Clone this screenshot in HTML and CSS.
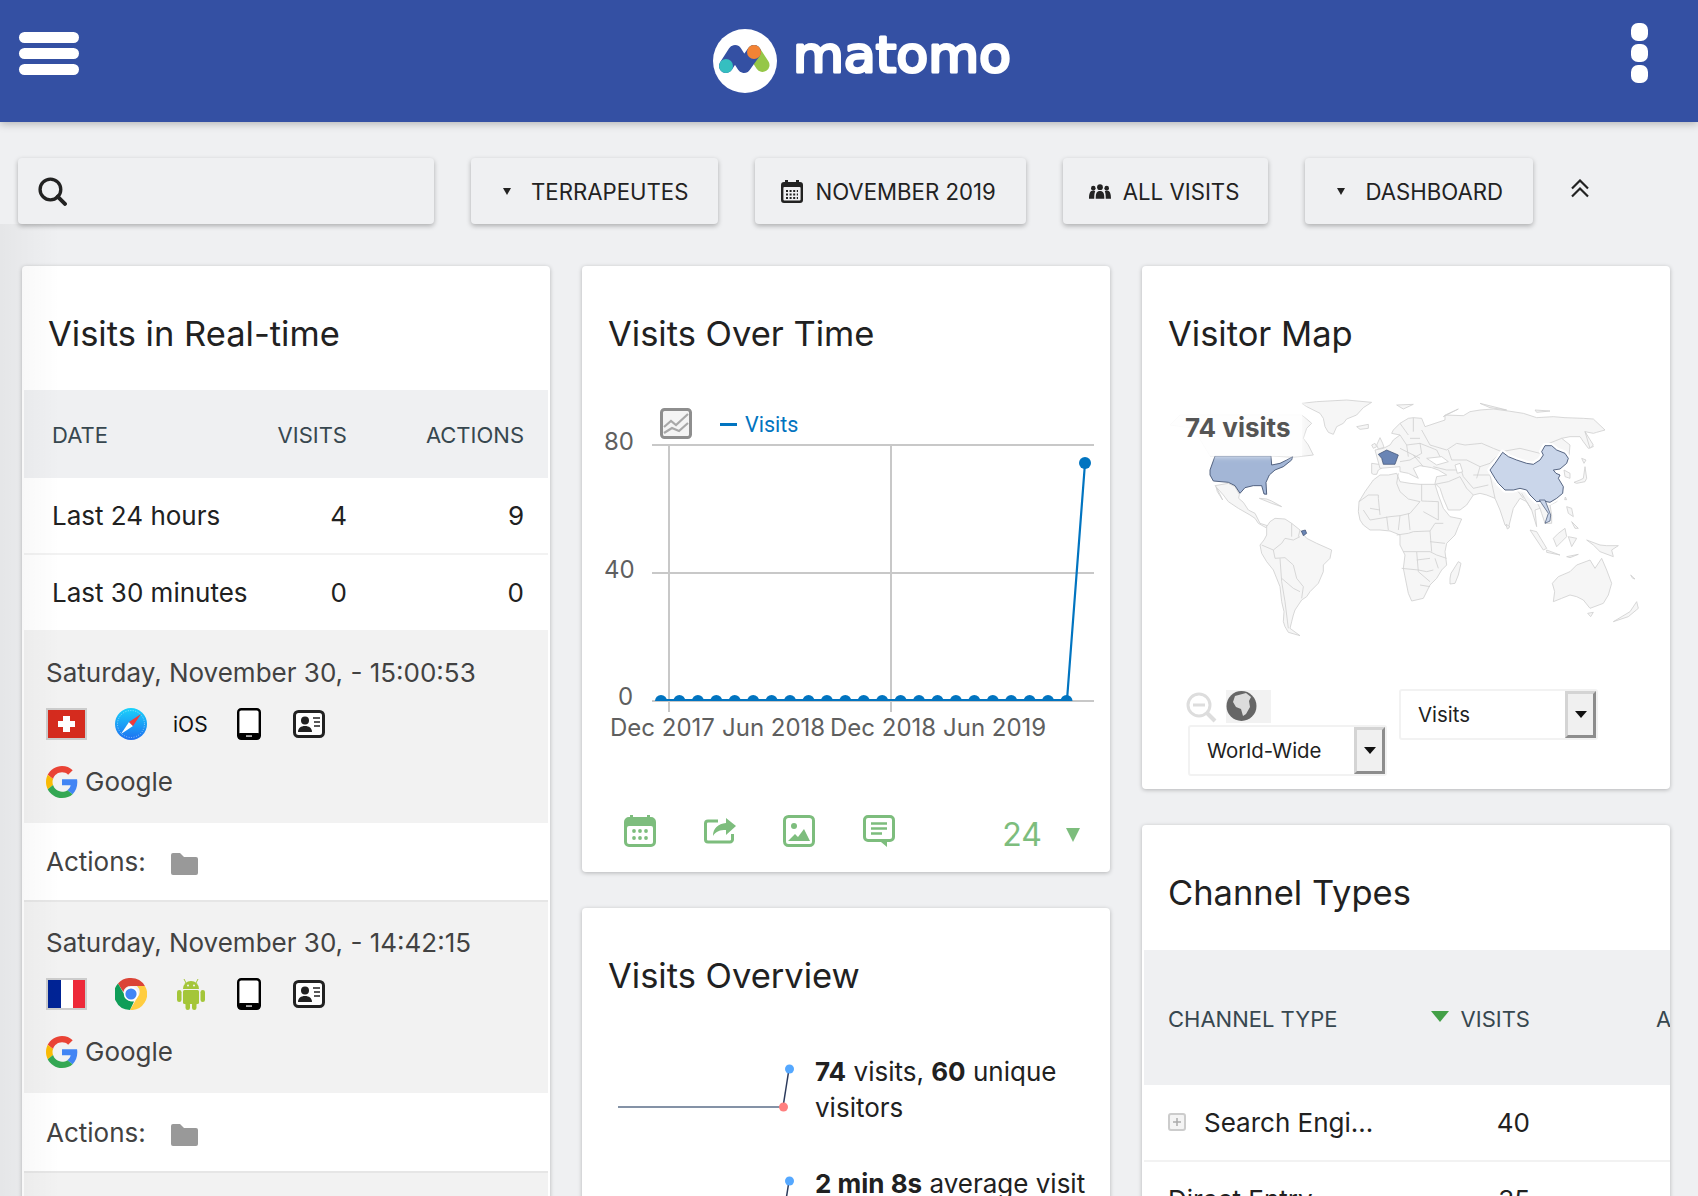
FILE: index.html
```html
<!DOCTYPE html>
<html lang="en">
<head>
<meta charset="utf-8">
<title>Matomo</title>
<link rel="stylesheet" href="styles.css">
</head>
<body>
<svg class="sprites" aria-hidden="true">
  <defs>
    <symbol id="g-logo" viewBox="0 0 48 48">
      <path fill="#EA4335" d="M24 9.5c3.54 0 6.71 1.22 9.21 3.6l6.85-6.85C35.9 2.38 30.47 0 24 0 14.62 0 6.51 5.38 2.56 13.22l7.98 6.19C12.43 13.72 17.74 9.5 24 9.5z"/>
      <path fill="#4285F4" d="M46.98 24.55c0-1.57-.15-3.09-.38-4.55H24v9.02h12.94c-.58 2.96-2.26 5.48-4.78 7.18l7.73 6c4.51-4.18 7.09-10.36 7.09-17.65z"/>
      <path fill="#FBBC05" d="M10.53 28.59c-.48-1.45-.76-2.99-.76-4.59s.27-3.14.76-4.59l-7.98-6.19C.92 16.46 0 20.12 0 24c0 3.88.92 7.54 2.56 10.78l7.97-6.19z"/>
      <path fill="#34A853" d="M24 48c6.48 0 11.93-2.13 15.89-5.81l-7.73-6c-2.15 1.45-4.92 2.3-8.16 2.3-6.26 0-11.57-4.22-13.47-9.91l-7.98 6.19C6.51 42.62 14.62 48 24 48z"/>
    </symbol>
    <symbol id="tablet" viewBox="0 0 24 32">
      <rect x="1.2" y="1.2" width="21.6" height="29.6" rx="3" fill="#fff" stroke="#000" stroke-width="2.4"/>
      <rect x="1" y="25" width="22" height="6" rx="2" fill="#000"/>
      <rect x="9" y="27.4" width="6" height="1.3" fill="#f2f2f2"/>
    </symbol>
    <symbol id="contact" viewBox="0 0 32 28">
      <rect x="1.5" y="1.5" width="29" height="25" rx="4" fill="#fff" stroke="#222" stroke-width="3"/>
      <circle cx="12" cy="10.5" r="4" fill="#222"/>
      <path fill="#222" d="M5 22c0-4 3-6 7-6s7 2 7 6z"/>
      <path stroke="#222" stroke-width="1.7" d="M20 8h7M21 12h6M21 16h6"/>
    </symbol>
    <symbol id="folder" viewBox="0 0 27 22">
      <path fill="#999" d="M0 2a2 2 0 0 1 2-2h7l4 4h12a2 2 0 0 1 2 2v14a2 2 0 0 1-2 2H2a2 2 0 0 1-2-2z"/>
    </symbol>
  </defs>
</svg>

<header class="topbar">
  <div class="burger"><span class="burger-bar"></span><span class="burger-bar"></span><span class="burger-bar"></span></div>
  <svg class="logo" viewBox="0 0 330 80" width="330" height="80" role="img" aria-label="matomo">
    <circle cx="45" cy="41" r="32" fill="#fff"/>
    <path d="M54 32L62.500 45" fill="none" stroke="#95c748" stroke-width="14" stroke-linecap="round"/>
    <path d="M26 46L35 32L44 46L54 32" fill="none" stroke="#3450a3" stroke-width="14" stroke-linecap="round" stroke-linejoin="round"/>
    <circle cx="54" cy="32" r="7" fill="#f38334"/>
    <circle cx="26" cy="46" r="7" fill="#35bfc0"/>
    <text class="logo-word" x="93" y="52" textLength="218" lengthAdjust="spacingAndGlyphs">matomo</text>
  </svg>
  <div class="kebab"><span class="kebab-dot"></span><span class="kebab-dot"></span><span class="kebab-dot"></span></div>
</header>

<nav class="toolbar">
  <div class="tool tool-search">
    <svg width="29" height="29" viewBox="0 0 28 28"><circle cx="12" cy="12" r="10" fill="none" stroke="#222" stroke-width="3.200"/><path d="M19 19l7 7" stroke="#222" stroke-width="3.800" stroke-linecap="round"/></svg>
  </div>
  <div class="tool tool-drop"><span class="caret"></span>TERRAPEUTES</div>
  <div class="tool">
    <svg width="22" height="23" viewBox="0 0 22 23"><path fill="#222" d="M4 0h3v2h8V0h3v2h1a3 3 0 0 1 3 3v15a3 3 0 0 1-3 3H3a3 3 0 0 1-3-3V5a3 3 0 0 1 3-3h1z"/><rect x="2.4" y="7" width="17.2" height="13.4" rx="1" fill="#f0f0f2"/><path stroke="#222" stroke-width="2" stroke-dasharray="2 1.6" d="M5 11h12M5 14.5h12M5 18h12" /></svg>
    NOVEMBER 2019
  </div>
  <div class="tool tool-visits">
    <svg width="22" height="15" viewBox="0 0 23 15"><g fill="#222"><circle cx="11.500" cy="3" r="3"/><circle cx="4.500" cy="4" r="2.400"/><circle cx="18.500" cy="4" r="2.400"/><path d="M7 15c0-6 1-8 4.500-8S16 9 16 15z"/><path d="M0 15c0-5 1-8.500 4.500-8.500 1 0 1.500.3 2 .8C5.600 9 5.500 12 5.500 15zM23 15c0-5-1-8.500-4.500-8.500-1 0-1.500.3-2 .8C17.400 9 17.500 12 17.500 15z"/></g></svg>
    ALL VISITS
  </div>
  <div class="tool tool-drop"><span class="caret"></span>DASHBOARD</div>
  <svg class="collapse" width="20" height="19" viewBox="0 0 20 19"><path d="M2 9.500l8-8 8 8M2 17.500l8-8 8 8" fill="none" stroke="#222" stroke-width="2.200"/></svg>
</nav>

<main class="dashboard">
  <section class="col">
    <article class="card">
      <h2 class="card-title">Visits in Real-time</h2>
      <table class="grid-table realtime">
        <colgroup><col class="rt-a"><col class="rt-b"><col class="rt-c"></colgroup>
        <thead><tr><th class="left">DATE</th><th>VISITS</th><th>ACTIONS</th></tr></thead>
        <tbody>
          <tr><td class="left">Last 24 hours</td><td>4</td><td>9</td></tr>
          <tr><td class="left">Last 30 minutes</td><td>0</td><td>0</td></tr>
        </tbody>
      </table>
      <div class="log log-first">
        <div class="log-date">Saturday, November 30, - 15:00:53</div>
        <div class="log-icons">
          <svg width="41" height="32" viewBox="0 0 41 32"><rect width="41" height="32" fill="#ccc"/><rect x="2" y="2" width="37" height="28" fill="#d52b1e"/><path fill="#fff" d="M17 8h7v5h5v6h-5v5h-7v-5h-5v-6h5z"/></svg>
          <svg width="32" height="32" viewBox="0 0 32 32"><defs><linearGradient id="saf" x1="0" y1="0" x2="0" y2="1"><stop offset="0" stop-color="#19d3fb"/><stop offset="1" stop-color="#1e6ff1"/></linearGradient></defs><circle cx="16" cy="16" r="16" fill="url(#saf)"/><circle cx="16" cy="16" r="13.500" fill="none" stroke="#fff" stroke-opacity=".5" stroke-dasharray="1 1.500"/><path fill="#fff" d="M6 26l8-12 4 4z"/><path fill="#f03a3a" d="M26 6l-12 8 4 4z"/></svg>
          <span class="os-text">iOS</span>
          <svg width="24" height="32"><use href="#tablet"/></svg>
          <svg width="32" height="28"><use href="#contact"/></svg>
        </div>
        <div class="log-ref"><svg width="32" height="32"><use href="#g-logo"/></svg>Google</div>
      </div>
      <div class="log-actions">Actions:<svg width="27" height="22"><use href="#folder"/></svg></div>
      <div class="log">
        <div class="log-date">Saturday, November 30, - 14:42:15</div>
        <div class="log-icons">
          <svg width="41" height="32" viewBox="0 0 41 32"><rect width="41" height="32" fill="#ccc"/><rect x="2" y="2" width="13" height="28" fill="#002395"/><rect x="15" y="2" width="12" height="28" fill="#fff"/><rect x="27" y="2" width="12" height="28" fill="#ed2939"/></svg>
          <svg width="32" height="32" viewBox="0 0 32 32"><path fill="#db4437" d="M16 0a16 16 0 0 1 13.900 8H16a8 8 0 0 0-7.700 5.900L3 5.500A16 16 0 0 1 16 0z"/><path fill="#0f9d58" d="M3 5.500l6.900 12A8 8 0 0 0 19 23.400l-4 8.600A16 16 0 0 1 3 5.500z"/><path fill="#ffcd40" d="M29.900 8A16 16 0 0 1 15 32l7-12a8 8 0 0 0 0-12z"/><circle cx="16" cy="16" r="7.200" fill="#fff"/><circle cx="16" cy="16" r="5.600" fill="#4285f4"/></svg>
          <svg class="droid" width="28" height="32" viewBox="0 0 28 32"><g fill="#a4c639"><path d="M6 11a8 8 0 0 1 16 0z"/><rect x="6" y="12" width="16" height="14" rx="1.500"/><rect x="0" y="12" width="4.500" height="12" rx="2.200"/><rect x="23.500" y="12" width="4.500" height="12" rx="2.200"/><rect x="8.500" y="24" width="4.500" height="8" rx="2.200"/><rect x="15" y="24" width="4.500" height="8" rx="2.200"/><path stroke="#a4c639" stroke-width="1" d="M9 5L7 1M19 5l2-4"/></g><circle cx="11" cy="7.500" r="1" fill="#f2f2f2"/><circle cx="17" cy="7.500" r="1" fill="#f2f2f2"/></svg>
          <svg width="24" height="32"><use href="#tablet"/></svg>
          <svg width="32" height="28"><use href="#contact"/></svg>
        </div>
        <div class="log-ref"><svg width="32" height="32"><use href="#g-logo"/></svg>Google</div>
      </div>
      <div class="log-actions">Actions:<svg width="27" height="22"><use href="#folder"/></svg></div>
      <div class="log log-tail"></div>
    </article>
  </section>

  <section class="col">
    <article class="card">
      <h2 class="card-title">Visits Over Time</h2>
      <svg class="chart" width="528" height="410" viewBox="582 390 528 410">
        <defs><clipPath id="base"><rect x="582" y="390" width="528" height="311"/></clipPath></defs>
        <g stroke="#c8c8c8" stroke-width="2" fill="none">
          <path d="M652 445H1094M652 573H1094M652 701H1094M669 445V712M891 445V712"/>
        </g>
        <g clip-path="url(#base)" fill="#0174c0">
          <circle cx="661" cy="701" r="6"/><circle cx="679.400" cy="701" r="6"/><circle cx="697.900" cy="701" r="6"/><circle cx="716.300" cy="701" r="6"/><circle cx="734.700" cy="701" r="6"/><circle cx="753.200" cy="701" r="6"/><circle cx="771.600" cy="701" r="6"/><circle cx="790" cy="701" r="6"/><circle cx="808.500" cy="701" r="6"/><circle cx="826.900" cy="701" r="6"/><circle cx="845.300" cy="701" r="6"/><circle cx="863.700" cy="701" r="6"/><circle cx="882.200" cy="701" r="6"/><circle cx="900.600" cy="701" r="6"/><circle cx="919" cy="701" r="6"/><circle cx="937.500" cy="701" r="6"/><circle cx="955.900" cy="701" r="6"/><circle cx="974.300" cy="701" r="6"/><circle cx="992.800" cy="701" r="6"/><circle cx="1011.200" cy="701" r="6"/><circle cx="1029.600" cy="701" r="6"/><circle cx="1048" cy="701" r="6"/><circle cx="1066.500" cy="701" r="6"/>
        </g>
        <path d="M661 700H1067L1085 463" fill="none" stroke="#0174c0" stroke-width="2.200"/>
        <circle cx="1085" cy="463" r="6" fill="#0174c0"/>
        <g class="axis-label">
          <text x="604" y="450">80</text><text x="604" y="578">40</text><text x="618" y="705">0</text>
          <text x="610" y="736">Dec 2017</text><text x="722" y="736">Jun 2018</text><text x="830" y="736">Dec 2018</text><text x="943" y="736">Jun 2019</text>
        </g>
        <g>
          <rect x="661.500" y="409.500" width="29" height="28" rx="3" fill="#f4f4f4" stroke="#8e8e8e" stroke-width="3"/>
          <path d="M664 427l7-6 5 4 12-11M664 433l8-5 7 3 9-8" fill="none" stroke="#a8a8a8" stroke-width="2.200"/>
        </g>
        <rect x="720" y="423" width="17" height="3" fill="#0174c0"/>
        <text class="legend-label" x="745" y="432">Visits</text>
      </svg>
      <div class="chart-foot">
        <svg width="32" height="32" viewBox="0 0 32 32"><path fill="#7dbd7d" d="M6 0h3v2h14V0h3v2h1a5 5 0 0 1 5 5v20a5 5 0 0 1-5 5H5a5 5 0 0 1-5-5V7a5 5 0 0 1 5-5h1z"/><rect x="3" y="11" width="26" height="18" rx="2" fill="#fff"/><g fill="#7dbd7d"><circle cx="10" cy="16" r="1.900"/><circle cx="16" cy="16" r="1.900"/><circle cx="22" cy="16" r="1.900"/><circle cx="10" cy="23" r="1.900"/><circle cx="16" cy="23" r="1.900"/><circle cx="22" cy="23" r="1.900"/></g></svg>
        <svg width="32" height="32" viewBox="0 0 32 32"><path d="M14 6H4a2.500 2.500 0 0 0-2.500 2.500v16A2.500 2.500 0 0 0 4 27h22a2.500 2.500 0 0 0 2.500-2.500V19" fill="none" stroke="#7dbd7d" stroke-width="3"/><path fill="#7dbd7d" d="M22 3l10 8-10 9v-5c-6 0-10 1-13 6 0-8 5-12 13-13z"/></svg>
        <svg width="32" height="32" viewBox="0 0 32 32"><rect x="1.500" y="1.500" width="29" height="29" rx="4" fill="#fff" stroke="#7dbd7d" stroke-width="3"/><circle cx="11" cy="11" r="3" fill="#7dbd7d"/><path fill="#7dbd7d" d="M5 26l7-7 3 3 6-8 6 12z"/></svg>
        <svg width="32" height="32" viewBox="0 0 32 32"><path fill="#7dbd7d" d="M5 0h22a5 5 0 0 1 5 5v17a5 5 0 0 1-5 5h-3v5l-6-5H5a5 5 0 0 1-5-5V5a5 5 0 0 1 5-5z"/><rect x="3" y="3" width="26" height="21" rx="2" fill="#fff"/><path stroke="#7dbd7d" stroke-width="2.400" d="M8 8.500h16M8 13.500h16M8 18.500h11"/></svg>
        <div class="period">24<span class="period-tri"></span></div>
      </div>
    </article>

    <article class="card">
      <h2 class="card-title">Visits Overview</h2>
      <div class="spark-list">
        <div class="spark-row">
          <svg width="197" height="72" viewBox="0 0 197 72"><path d="M0 53H165" stroke="#8492a6" stroke-width="2"/><path d="M165 53L171 15" stroke="#2b3a5c" stroke-width="1.500"/><circle cx="165.500" cy="53" r="4.500" fill="#ff7f7f"/><circle cx="171.500" cy="15" r="4.500" fill="#55a8ff"/></svg>
          <p class="spark-text"><b>74</b> visits, <b>60</b> unique visitors</p>
        </div>
        <div class="spark-row">
          <svg width="197" height="72" viewBox="0 0 197 72"><path d="M165 53L171 15" stroke="#2b3a5c" stroke-width="1.500"/><circle cx="171.500" cy="15" r="4.500" fill="#55a8ff"/></svg>
          <p class="spark-text"><b>2 min 8s</b> average visit duration</p>
        </div>
      </div>
    </article>
  </section>

  <section class="col">
    <article class="card">
      <h2 class="card-title">Visitor Map</h2>
      <div class="map-wrap">
        <svg class="map" width="490" height="250" viewBox="0 0 1470 750">
          <g fill="#f6f6f6" stroke="#d0d0d0" stroke-width="2.500" stroke-linejoin="round">
            <path d="M30 90L60 60L425 60L440 72L455 85L440 100L430 130L445 150L460 180L400 187L333 183L150 183L100 100Z"/>
            <path d="M425 25L470 20L560 15L635 22L610 38L590 60L560 72L550 85L530 95L520 118L505 112L495 95L490 70L480 55L440 35Z"/>
            <path d="M590 95L625 88L625 100L600 103Z"/>
            <path d="M635 150L645 145L650 155L640 160Z"/>
            <path d="M650 150L660 128L668 145L672 157L655 162Z"/>
            <path d="M635 205L670 210L672 215L655 225L650 238L640 238L635 235Z"/>
            <path d="M165 272L205 265L225 275L238 298L236 310L250 322L265 345L285 355L300 385L322 392L318 398L295 385L285 370L270 360L235 340L205 320L190 300Z"/>
            <path d="M168 275L172 290L188 315L180 298Z"/>
            <path d="M298 310L320 312L335 318L365 335L335 325Z"/>
            <path d="M320 395L330 380L345 370L375 372L395 385L420 405L440 430L470 445L515 465L510 490L490 510L490 530L475 565L450 590L440 605L425 615L415 630L405 645L400 660L395 680L390 700L420 722L385 712L375 695L370 680L372 650L365 620L360 575L340 525L320 500L305 475L300 450L312 435L320 420Z"/>
            <path fill="none" d="M305 450L340 465L345 490M340 465L365 445L375 430L400 435L420 425M345 490L375 488L400 510L410 550L430 575L425 610M360 490L365 560L375 620L385 700M365 550L400 580L420 590M395 385L395 425M420 405L415 425"/>
          </g>
          <g transform="translate(660 0)" fill="#f6f6f6" stroke="#d0d0d0" stroke-width="2.500" stroke-linejoin="round">
            <path d="M-63 320L-45 290L-20 255L0 240L25 240L50 235L60 260L90 265L120 268L165 268L175 300L190 340L210 365L245 372L235 395L225 420L200 445L195 470L200 510L185 525L170 550L150 570L130 610L95 618L85 595L80 570L70 520L75 480L60 450L60 420L30 408L0 405L-30 405L-50 390L-60 375L-65 350Z"/>
            <path fill="none" d="M-63 320L-35 300L-5 300L-5 310L0 360M55 235L50 265L60 290L85 312L120 320M125 268L125 318L175 320L175 345L175 375M-30 375L30 365L60 362L90 355L120 320M50 420L85 415L100 410L150 408L165 385L190 385M70 470L110 470L150 470L170 480L200 490M110 470L115 530L150 560M65 520L115 525L140 530L160 525M150 408L155 470M20 365L25 405M60 362L55 405M-30 340L0 345M-50 345L-30 375M85 355L90 405M130 350L175 375M150 440L195 445M110 495L150 490M165 490L175 520M120 570L150 575"/>
            <path d="M235 500L243 505L235 540L225 565L210 567L210 550L213 535Z"/>
            <path d="M-15 165L10 160L30 150L40 135L60 120L35 115L40 105L60 85L85 70L100 68L125 70L135 95L165 85L195 75L195 60L250 62L270 50L300 45L340 42L385 48L430 55L470 68L520 65L555 68L610 70L640 72L675 105L650 112L640 115L615 110L625 130L640 155L625 160L610 140L600 125L570 125L545 130L570 150L565 205L540 225L530 240L550 290L530 320L510 330L515 360L515 385L495 385L485 355L480 340L465 345L470 395L455 345L440 320L420 310L400 340L385 400L375 390L360 345L345 310L320 300L300 295L280 300L260 330L240 345L205 345L190 310L180 280L165 265L170 245L200 240L175 225L155 218L120 212L100 220L115 250L85 235L60 230L60 215L0 220Z"/>
            <path fill="none" d="M125 105L150 150L200 165L230 145L255 150L305 145L340 160L365 170L420 160L480 175L495 150L545 130M205 165L215 195L260 195L300 215L330 205L365 170M60 120L80 150L120 145L170 165L180 185M60 200L90 195L125 175M100 180L130 215M60 160L120 190M80 150L85 185M120 145L125 175M240 215L250 245L280 280L325 270M165 268L205 260L240 245L260 280L280 300M330 240L345 310M345 265L380 275L415 290L430 310M425 295L440 320L455 345M90 130L120 130M160 215L200 225L240 225M280 240L330 240M300 215L290 250M470 320L480 340M60 85L85 120M100 68L100 110"/>
            <path fill="#fff" d="M140 190L185 185L205 200L170 210Z"/>
            <path fill="#fff" d="M225 210L240 205L248 230L232 235Z"/>
            <path d="M552 225L570 235L570 250L555 245Z"/>
            <path d="M582 262L600 255L610 250L615 215L620 250L615 260L590 265Z"/>
            <path d="M605 190L618 195L612 205Z"/>
            <path d="M615 110L640 150L630 160Z"/>
            <path d="M556 306L560 314L554 314Z"/>
            <path d="M560 335L575 340L580 365L565 355Z"/>
            <path d="M575 380L595 400L585 400Z"/>
            <path d="M520 430L535 415L555 400L560 425L545 440L530 455Z"/>
            <path d="M450 405L470 410L500 460L490 465Z"/>
            <path d="M500 465L540 480L500 472Z"/>
            <path d="M565 425L590 430L575 455Z"/>
            <path d="M560 485L595 478L570 488Z"/>
            <path d="M620 435L660 450L680 452L715 452L695 465L700 485L660 470L640 450Z"/>
            <path d="M517 565L535 545L570 530L590 510L630 495L645 520L665 490L680 525L695 565L685 600L670 625L630 640L610 615L590 605L570 600L545 610L520 620L524 590Z"/>
            <path d="M623 655L640 652L632 665Z"/>
            <path d="M700 680L750 650L770 620L775 640L745 665Z"/>
            <path d="M752 540L765 552L758 550Z"/>
            <path d="M50 30L100 28L70 42Z"/>
            <path d="M190 65L235 42L200 58Z"/>
            <path d="M300 25L380 45L330 38Z"/>
            <path d="M465 45L510 48L470 52Z"/>
            <path d="M378 388L390 395L382 402Z"/>
          </g>
          <path fill="#a3b6d6" stroke="#3a4a6b" stroke-width="2.500" stroke-linejoin="round" d="M150 225L165 183L333 183L335 210L360 205L380 195L398 185L395 195L370 215L345 225L328 240L318 262L320 298L312 297L305 272L280 272L255 278L240 295L225 272L205 262L160 258L150 240Z"/>
          <path fill="#6a85b5" stroke="#3a4a6b" stroke-width="2" stroke-linejoin="round" d="M655 178L680 165L715 180L705 208L670 208L665 190Z"/>
          <path fill="#6a85b5" stroke="#3a4a6b" stroke-width="2" stroke-linejoin="round" d="M424 408L436 405L440 415L430 422Z"/>
          <g transform="translate(660 0)" stroke-linejoin="round">
            <path fill="none" stroke="#fff" stroke-width="16" d="M330 225L345 205L368 172L385 185L410 195L440 205L460 208L480 195L490 180L485 170L495 152L515 152L530 165L555 175L565 190L560 205L540 222L520 225L528 235L540 240L535 250L550 275L548 295L530 310L510 322L490 318L470 320L450 300L440 285L420 280L400 285L375 285L355 265L345 250Z"/>
            <path fill="#cad6ea" stroke="#3a4a6b" stroke-width="2.500" d="M330 225L345 205L368 172L385 185L410 195L440 205L460 208L480 195L490 180L485 170L495 152L515 152L530 165L555 175L565 190L560 205L540 222L520 225L528 235L540 240L535 250L550 275L548 295L530 310L510 322L490 318L470 320L450 300L440 285L420 280L400 285L375 285L355 265L345 250Z"/>
            <path fill="#cad6ea" stroke="#3a4a6b" stroke-width="2" d="M478 315L495 315L512 360L510 378L495 385L505 355Z"/>
          </g>
        </svg>
        <div class="map-tip">74 visits</div>
      </div>
      <div class="map-controls">
        <div class="map-left">
          <div class="map-tools">
            <svg class="zoom-out" width="31" height="31" viewBox="0 0 31 31"><circle cx="13" cy="13" r="11" fill="none" stroke="#ddd" stroke-width="3"/><path d="M7 13h12" stroke="#ddd" stroke-width="3"/><path d="M21 21l8 8" stroke="#ddd" stroke-width="4"/></svg>
            <div class="globe-tile"><svg width="31" height="32" viewBox="0 0 31 32"><circle cx="15.500" cy="16" r="15" fill="#666"/><path fill="#dcdcdc" d="M9 6l11-3 5 4-2 4 1 6-4 7-3 2-2-7-5-2-3-5z"/></svg></div>
          </div>
          <div class="select"><span class="select-text">World-Wide</span><span class="select-btn"><span class="select-tri"></span></span></div>
        </div>
        <div class="select"><span class="select-text">Visits</span><span class="select-btn"><span class="select-tri"></span></span></div>
      </div>
    </article>

    <article class="card">
      <h2 class="card-title channel-title">Channel Types</h2>
      <div class="clip">
        <table class="grid-table channel">
          <colgroup><col class="ch-a"><col class="ch-b"><col class="ch-c"></colgroup>
          <thead><tr><th class="left">CHANNEL TYPE</th><th><span class="sort-tri"></span>VISITS</th><th>ACTIONS</th></tr></thead>
          <tbody>
            <tr><td class="left"><svg class="plus" width="18" height="18" viewBox="0 0 18 18"><rect x="1" y="1" width="16" height="16" rx="2" fill="#f4f4f4" stroke="#ccc" stroke-width="2"/><path d="M9 5v8M5 9h8" stroke="#aaa" stroke-width="1.500"/></svg>Search Engi...</td><td>40</td><td></td></tr>
            <tr><td class="left">Direct Entry</td><td>35</td><td></td></tr>
          </tbody>
        </table>
      </div>
    </article>
  </section>
</main>
</body>
</html>
```

FILE: styles.css
```css
* { box-sizing: border-box; }
html, body { margin: 0; height: 1196px; overflow: hidden; }
body {
  background: #eff0f2;
  color: #212121;
  font-family: Inter, "Liberation Sans", sans-serif;
  position: relative;
}
.sprites { position: absolute; width: 0; height: 0; }

/* Top bar */
.topbar {
  height: 122px;
  background: #3450a3;
  box-shadow: 0 2px 8px rgba(0, 0, 0, .25);
  display: flex;
  align-items: flex-start;
  justify-content: space-between;
  padding: 0 50px 0 19px;
  position: relative;
}
.burger { display: flex; flex-direction: column; gap: 5px; padding-top: 32px; width: 60px; }
.burger-bar { display: block; height: 11px; background: #fff; border-radius: 6px; }
.logo { margin-top: 20px; margin-left: 19px; }
.logo-word {
  font-family: "DejaVu Sans", sans-serif;
  font-size: 50px;
  font-weight: 400;
  fill: #fff;
  stroke: #fff;
  stroke-width: 3;
  stroke-linejoin: round;
}
.kebab { display: flex; flex-direction: column; gap: 3px; padding-top: 23px; width: 17px; }
.kebab-dot { display: block; height: 18px; background: #fff; border-radius: 7px; }

/* Toolbar */
.toolbar {
  display: flex;
  align-items: flex-start;
  gap: 37px;
  padding: 36px 0 0 18px;
}
.tool {
  height: 66px;
  background: #eff0f2;
  border-radius: 4px;
  box-shadow: 0 2px 5px rgba(0, 0, 0, .28);
  display: flex;
  align-items: center;
  gap: 12px;
  padding: 0 30px 0 26px;
  font-size: 22.200px;
  color: #222;
  white-space: nowrap;
}
.tool-search { width: 416px; padding-left: 20px; }
.tool-drop { gap: 20px; padding-left: 32px; }
.tool-visits { padding-right: 29px; }
.caret {
  width: 0; height: 0;
  border-left: 4.500px solid transparent;
  border-right: 4.500px solid transparent;
  border-top: 7px solid #222;
}
.collapse { margin: 21px 0 0 0; }

/* Dashboard */
.dashboard {
  display: grid;
  grid-template-columns: repeat(3, 528px);
  gap: 32px;
  padding: 42px 0 0 22px;
  position: relative;
}
.dashboard::before {
  content: "";
  position: absolute;
  left: 0;
  top: 0;
  bottom: 0;
  width: 60px;
  background: linear-gradient(90deg, rgba(0, 0, 0, .045), rgba(0, 0, 0, 0));
  pointer-events: none;
  z-index: 2;
}
.col { display: flex; flex-direction: column; gap: 36px; }
.card {
  background: #fff;
  border-radius: 4px;
  box-shadow: 0 1px 4px rgba(0, 0, 0, .25);
  overflow: hidden;
}
.card-title {
  margin: 0;
  height: 124px;
  padding: 46px 0 0 26px;
  font-size: 34.500px;
  line-height: 44px;
  font-weight: 400;
  color: #212121;
}
.channel-title { height: 125px; }

/* Tables */
.grid-table {
  border-collapse: separate;
  border-spacing: 0;
  table-layout: fixed;
  margin: 0 2px;
}
.grid-table th {
  background: #eff0f2;
  color: #37474f;
  font-size: 22px;
  font-weight: 400;
  height: 88px;
  text-align: right;
  padding: 2px 24px 0 0;
  white-space: nowrap;
}
.grid-table td {
  height: 77px;
  font-size: 26px;
  text-align: right;
  padding: 0 24px 0 0;
  border-bottom: 2px solid #f2f2f2;
  white-space: nowrap;
}
.grid-table .left { text-align: left; padding-left: 28px; padding-right: 0; }
.realtime { width: 524px; }
.rt-a { width: 228px; }
.rt-b { width: 119px; }
.rt-c { width: 177px; }

.clip { overflow: hidden; }
.channel { width: 634px; }
.ch-a { width: 238px; }
.ch-b { width: 172px; }
.ch-c { width: 224px; }
.channel th { height: 135px; }
.channel .left { padding-left: 24px; }
.plus { vertical-align: 1px; margin-right: 18px; }
.sort-tri {
  display: inline-block;
  width: 0; height: 0;
  margin: 0 12px 5px 0;
  border-left: 9px solid transparent;
  border-right: 9px solid transparent;
  border-top: 11px solid #43a047;
}

/* Live log */
.log {
  margin: 0 2px;
  background: #f2f2f2;
  padding: 26px 0 25px 22px;
  color: #424242;
}
.log-date { font-size: 26px; line-height: 30px; }
.log-icons {
  display: grid;
  grid-template-columns: 69px 57px 65px 56px 32px;
  align-items: center;
  justify-items: start;
  height: 32px;
  margin-top: 20px;
}
.os-text { font-size: 21px; color: #111; margin-left: 1px; }
.droid { margin-left: 5px; }
.log-ref {
  display: flex;
  align-items: center;
  gap: 7px;
  margin-top: 26px;
  font-size: 26px;
  line-height: 32px;
}
.log-actions {
  margin: 0 2px;
  height: 80px;
  border-bottom: 2px solid #e6e6e6;
  padding: 0 0 0 22px;
  display: flex;
  align-items: center;
  gap: 25px;
  font-size: 26px;
  color: #424242;
}
.log-first + .log-actions { height: 79px; }
.log-actions svg { margin-top: 5px; }
.log-tail { height: 40px; padding: 0; }

/* Chart */
.chart { display: block; }
.axis-label text { font-family: Inter, sans-serif; font-size: 24px; fill: #5f5f5f; }
.legend-label { font-family: Roboto, sans-serif; font-size: 21.500px; fill: #0174c0; }
.chart-foot {
  height: 72px;
  display: flex;
  align-items: flex-start;
  gap: 47.500px;
  padding: 15px 30px 0 42px;
}
.period {
  margin-left: auto;
  display: flex;
  align-items: center;
  gap: 24px;
  font-size: 32px;
  line-height: 40px;
  color: #7dbd7d;
  height: 40px;
}
.period-tri {
  width: 0; height: 0;
  border-left: 7px solid transparent;
  border-right: 7px solid transparent;
  border-top: 14px solid #7dbd7d;
}

/* Overview sparklines */
.spark-list { padding-top: 22px; }
.spark-row {
  display: flex;
  align-items: flex-start;
  padding: 0 20px 40px 36px;
}
.spark-text {
  margin: 0;
  font-size: 26px;
  line-height: 36px;
  color: #212121;
}
.spark-row svg { flex: none; }
.spark-text b { font-weight: 700; }

/* Map */
.map-wrap { position: relative; margin: 5px 0 44px 18px; height: 250px; }
.map { display: block; }
.map-tip {
  position: absolute;
  left: 6px;
  top: 3px;
  width: 136px;
  height: 58px;
  padding-left: 19px;
  font-size: 26px;
  font-weight: 700;
  line-height: 60px;
  color: #555;
  background: rgba(255, 255, 255, .9);
  box-shadow: -2px -3px 6px 3px rgba(255, 255, 255, .85);
  white-space: nowrap;
}
.map-controls {
  display: flex;
  align-items: flex-start;
  gap: 10px;
  padding: 0 0 13px 44px;
}
.map-left { width: 201px; }
.map-tools { display: flex; align-items: flex-start; gap: 9px; height: 36px; padding-top: 3px; }
.zoom-out { flex: none; }
.globe-tile { width: 45px; height: 33px; margin-top: -2px; background: #f2f2f2; }
.globe-tile svg { display: block; }
.select {
  width: 199px;
  height: 51px;
  margin-left: 2px;
  border: 2px solid #f2f2f2;
  border-radius: 3px;
  display: flex;
  align-items: center;
  justify-content: space-between;
  font-size: 20.400px;
  color: #212121;
}
.select-text { padding-left: 17px; }
.select-btn {
  width: 31px;
  height: 47px;
  background: #f0f0f0;
  border-style: solid;
  border-width: 3px;
  border-color: #d4d4d4 #8d8d8d #8d8d8d #d4d4d4;
  display: flex;
  align-items: center;
  justify-content: center;
}
.select-tri {
  width: 0; height: 0;
  border-left: 6px solid transparent;
  border-right: 6px solid transparent;
  border-top: 7px solid #111;
}
```
